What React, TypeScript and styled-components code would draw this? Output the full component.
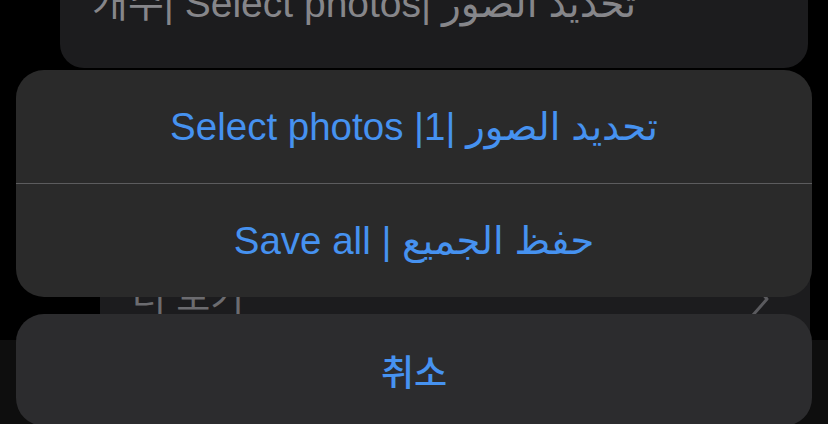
import { createGlobalStyle, styled } from "styled-components";

const GlobalStyle = createGlobalStyle`
  html, body {
    margin: 0;
    padding: 0;
    background: #000;
    overflow: hidden;
  }
`;

const actions = ["Select photos |1| تحديد الصور", "Save all | حفظ الجميع"];

export default function App() {
  return (
    <>
      <GlobalStyle />
      <Screen>
        <Backdrop>
          <TopCard>
            <BackLabel>개수| Select photos| تحديد الصور</BackLabel>
          </TopCard>
          <MoreCard>
            <BackLabel>더 보기</BackLabel>
            <Chevron viewBox="0 0 20 36" aria-hidden>
              <path d="M3 2 L17 18 L3 34" />
            </Chevron>
          </MoreCard>
          <BottomBar />
        </Backdrop>

        <Sheet>
          <ActionGroup>
            {actions.map((label, i) => (
              <ActionRow key={label} $divided={i > 0}>
                {label}
              </ActionRow>
            ))}
          </ActionGroup>
          <CancelButton>취소</CancelButton>
        </Sheet>
      </Screen>
    </>
  );
}

const Screen = styled.div`
  position: relative;
  width: 828px;
  height: 424px;
  overflow: hidden;
  background: #000;
`;

const Backdrop = styled.div`
  display: flex;
  flex-direction: column;
`;

const BackLabel = styled.span`
  font-family: "Liberation Sans", "Noto Sans CJK KR", "DejaVu Sans", sans-serif;
  font-size: 39px;
  line-height: 39px;
  color: #86868a;
  white-space: nowrap;
`;

const TopCard = styled.div`
  margin: -40px 20px 0 60px;
  height: 108px;
  padding: 24px 32px 0;
  box-sizing: border-box;
  background: #1c1c1e;
  border-radius: 24px;
`;

const MoreCard = styled.div`
  margin: 132px 18px 0 100px;
  height: 140px;
  padding: 0 40px 23px 32px;
  box-sizing: border-box;
  display: flex;
  align-items: flex-end;
  justify-content: space-between;
  background: #1c1c1e;
  border-radius: 24px 24px 0 0;

  ${BackLabel} {
    font-size: 37px;
    line-height: 37px;
    color: #6c6c70;
  }
`;

const Chevron = styled.svg`
  width: 20px;
  height: 36px;
  fill: none;
  stroke: #5a5a5e;
  stroke-width: 3;
  stroke-linecap: round;
  stroke-linejoin: round;
`;

const BottomBar = styled.div`
  height: 84px;
  background: #0e0e0e;
`;

const Sheet = styled.div`
  position: absolute;
  top: 70px;
  left: 16px;
  right: 16px;
  display: flex;
  flex-direction: column;
  gap: 17px;
`;

const ActionGroup = styled.div`
  display: flex;
  flex-direction: column;
  background: #2a2a2a;
  border-radius: 28px;
  overflow: hidden;
`;

const ActionRow = styled.div<{ $divided: boolean }>`
  height: 113px;
  display: flex;
  align-items: center;
  justify-content: center;
  border-top: ${(p) => (p.$divided ? "1px solid #5c5c5e" : "none")};
  font-family: "Liberation Sans", "DejaVu Sans", sans-serif;
  font-size: 38.5px;
  color: #4692f0;
  white-space: nowrap;
`;

const CancelButton = styled.div`
  height: 112px;
  display: flex;
  align-items: center;
  justify-content: center;
  background: #2c2c2e;
  border-radius: 28px;
  font-family: "Noto Sans CJK KR", sans-serif;
  font-size: 36px;
  font-weight: 500;
  color: #4692f0;
`;
